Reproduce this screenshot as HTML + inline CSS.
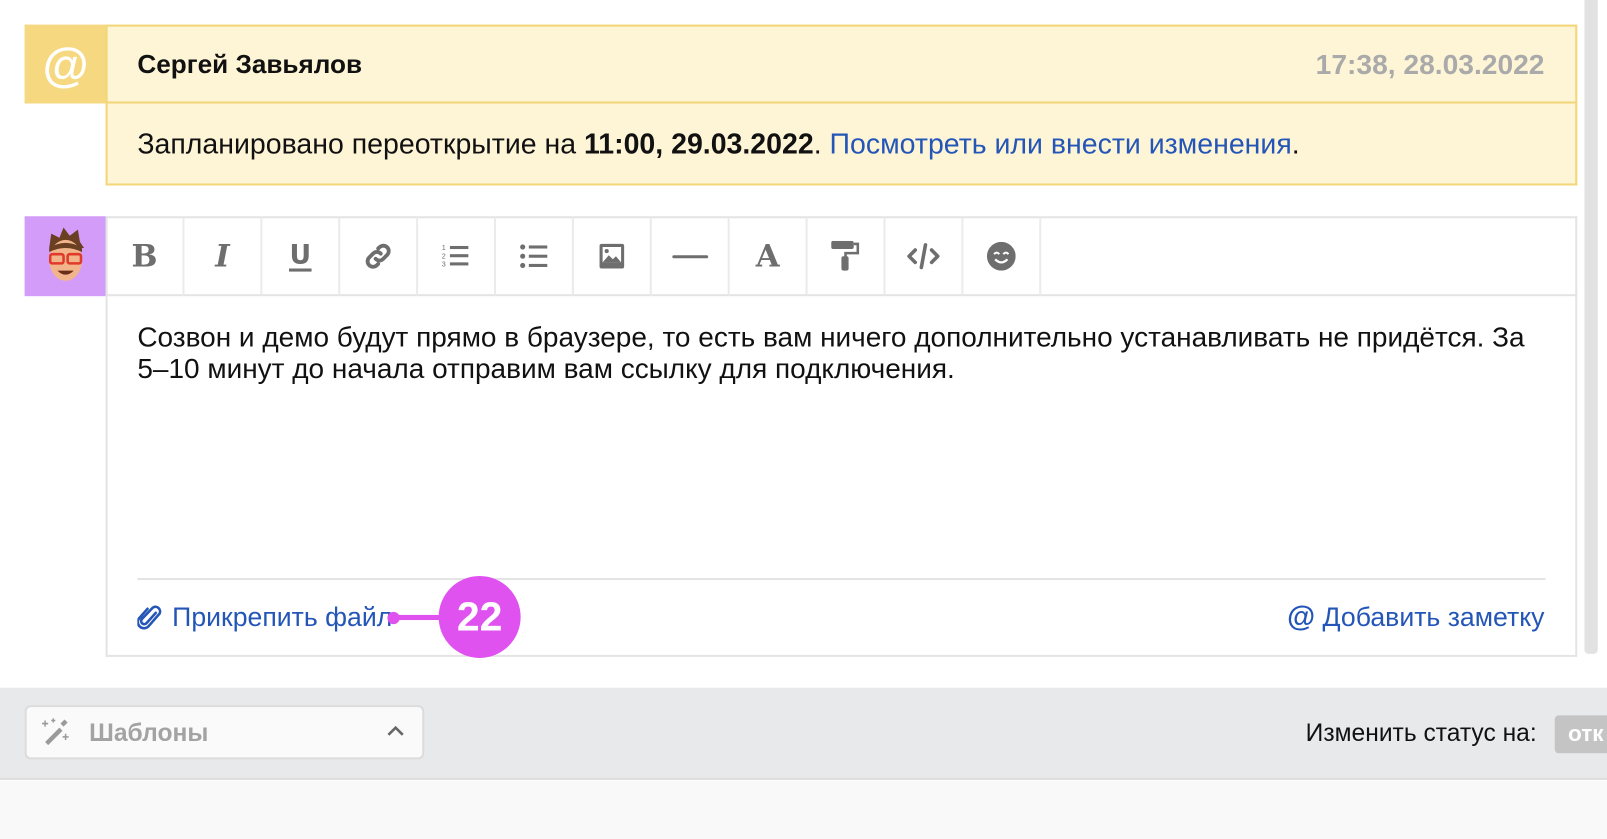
<!DOCTYPE html>
<html><head><meta charset="utf-8"><style>
*{box-sizing:border-box;margin:0;padding:0}
body{width:1607px;height:819px;background:#fff;font-family:"Liberation Sans",sans-serif;overflow:hidden;color:#1a1a1a}
#w{position:relative;width:1568px;height:800px;transform:scale(1.02487);transform-origin:0 0}
.abs{position:absolute}
.tb{position:absolute;top:212px;width:76px;height:76px;border-right:2px solid #ebebeb;display:flex;align-items:center;justify-content:center}
</style></head><body><div id="w">
<div class="abs" style="left:0;top:0;width:1568px;height:671px;background:#fff"></div>
<div class="abs" style="left:1546px;top:0;width:13px;height:638px;background:#e2e2e2;border-radius:0 0 4px 4px"></div>

<div class="abs" style="left:24px;top:24px;width:80px;height:77px;background:#f5d87f;display:flex;align-items:center;justify-content:center;color:#fff;font-size:46px;font-weight:bold">@</div>
<div class="abs" style="left:103px;top:24px;width:1436px;height:157px;background:#fef5d7;border:2px solid #f2d677"></div>
<div class="abs" style="left:103px;top:99px;width:1436px;height:2px;background:#f2d677"></div>
<div class="abs" style="left:134px;top:47px;font-size:25.5px;line-height:32px;font-weight:bold;color:#111">Сергей Завьялов</div>
<div class="abs" style="right:61px;top:46px;font-size:27.5px;line-height:34px;font-weight:bold;color:#aaa">17:38, 28.03.2022</div>
<div class="abs" style="left:134px;top:124px;font-size:27.8px;line-height:34px;color:#111;white-space:nowrap">Запланировано переоткрытие на <b>11:00, 29.03.2022</b>. <span style="color:#2456b8">Посмотреть или внести изменения</span>.</div>

<div class="abs" style="left:24px;top:211px;width:80px;height:78px;background:#d49cf9;display:flex;align-items:center;justify-content:center">
<svg width="48" height="60" viewBox="0 0 48 60"><path d="M8 22 L10 8 L18 12 L22 2 L28 10 L36 4 L38 16 L42 22 Z" fill="#6b3f22"/><ellipse cx="24" cy="34" rx="16" ry="20" fill="#f2b48a"/><path d="M8 22 Q24 12 40 22 L40 26 Q24 18 8 26Z" fill="#6b3f22"/><rect x="9" y="28" width="13" height="9" rx="2" fill="none" stroke="#e03a2a" stroke-width="2.5"/><rect x="26" y="28" width="13" height="9" rx="2" fill="none" stroke="#e03a2a" stroke-width="2.5"/><path d="M16 44 Q24 52 32 44Z" fill="#6a2d1a"/></svg></div>
<div class="abs" style="left:103px;top:211px;width:1436px;height:430px;border:2px solid #e4e4e4"></div>
<div class="abs" style="left:103px;top:287px;width:1436px;height:2px;background:#e4e4e4"></div>

<div class="tb" style="left:104px"><span style="font:bold 30px 'DejaVu Serif',serif;color:#6e6e6e">B</span></div>
<div class="tb" style="left:180px"><span style="font:italic bold 30px 'DejaVu Serif',serif;color:#6e6e6e">I</span></div>
<div class="tb" style="left:256px"><span style="font:bold 26px 'DejaVu Sans',sans-serif;color:#6e6e6e;border-bottom:3px solid #6e6e6e;line-height:26px">U</span></div>
<div class="tb" style="left:332px"><svg width="30" height="30" viewBox="0 0 24 24" fill="none" stroke="#6e6e6e" stroke-width="3" stroke-linecap="round"><path d="M10 14a4 4 0 0 0 6 0l3-3a4 4 0 0 0-6-6l-1 1"/><path d="M14 10a4 4 0 0 0-6 0l-3 3a4 4 0 0 0 6 6l1-1"/></svg></div>
<div class="tb" style="left:408px"><svg width="28" height="26" viewBox="0 0 28 26"><text x="0" y="7" font-size="7" fill="#6e6e6e" font-family="Liberation Sans">1</text><text x="0" y="15" font-size="7" fill="#6e6e6e" font-family="Liberation Sans">2</text><text x="0" y="23" font-size="7" fill="#6e6e6e" font-family="Liberation Sans">3</text><rect x="8" y="3" width="18" height="3" fill="#6e6e6e"/><rect x="8" y="11" width="18" height="3" fill="#6e6e6e"/><rect x="8" y="19" width="18" height="3" fill="#6e6e6e"/></svg></div>
<div class="tb" style="left:484px"><svg width="28" height="24" viewBox="0 0 28 24" fill="#6e6e6e"><circle cx="3" cy="3" r="2.5"/><circle cx="3" cy="12" r="2.5"/><circle cx="3" cy="21" r="2.5"/><rect x="9" y="1.5" width="18" height="3"/><rect x="9" y="10.5" width="18" height="3"/><rect x="9" y="19.5" width="18" height="3"/></svg></div>
<div class="tb" style="left:560px"><svg width="26" height="26" viewBox="0 0 26 26"><rect x="1" y="1" width="24" height="24" rx="2" fill="#6e6e6e"/><rect x="4" y="4" width="18" height="15" fill="#fff"/><circle cx="8" cy="8" r="2" fill="#6e6e6e"/><path d="M4 19 L10 12 L14 16 L17 13 L22 19Z" fill="#6e6e6e"/></svg></div>
<div class="tb" style="left:636px"><div style="width:35px;height:3px;background:#6e6e6e;border-radius:2px"></div></div>
<div class="tb" style="left:712px"><span style="font:bold 30px 'DejaVu Serif',serif;color:#6e6e6e">A</span></div>
<div class="tb" style="left:788px"><svg width="28" height="30" viewBox="0 0 28 30" fill="#6e6e6e"><rect x="0" y="0" width="22" height="8" rx="2"/><path d="M22 3 h4 v9 h-12 v4" fill="none" stroke="#6e6e6e" stroke-width="2.5"/><rect x="10" y="15" width="7" height="14" rx="2"/></svg></div>
<div class="tb" style="left:864px"><svg width="34" height="28" viewBox="0 0 34 28" fill="none" stroke="#6e6e6e" stroke-width="3.5" stroke-linecap="round" stroke-linejoin="round"><path d="M9 8 L3 14 L9 20"/><path d="M25 8 L31 14 L25 20"/><path d="M19 3 L15 25"/></svg></div>
<div class="tb" style="left:940px"><svg width="28" height="28" viewBox="0 0 28 28"><circle cx="14" cy="14" r="14" fill="#6e6e6e"/><path d="M7 12 q2.5-3 5 0 M16 12 q2.5-3 5 0" fill="none" stroke="#fff" stroke-width="2"/><path d="M8 17 q6 6 12 0" fill="none" stroke="#fff" stroke-width="2.2"/></svg></div>

<div class="abs" style="left:134px;top:313px;width:1385px;font-size:27.3px;line-height:31px;color:#111">Созвон и демо будут прямо в браузере, то есть вам ничего дополнительно устанавливать не придётся. За <span style="white-space:nowrap">5–10</span> минут до начала отправим вам ссылку для подключения.</div>

<div class="abs" style="left:134px;top:564px;width:1374px;height:2px;background:#e4e4e4"></div>
<div class="abs" style="left:134px;top:586px;font-size:26px;line-height:32px;color:#2456b8;display:flex;align-items:center;gap:10px"><svg width="24" height="26" viewBox="0 0 24 26" fill="none" stroke="#2456b8" stroke-width="2.5" stroke-linecap="round"><path d="M18 9 L9 19 a3 3 0 0 1-4.5-4 L15 4 a4.5 4.5 0 0 1 6.5 6 L11 22 a6 6 0 0 1-9-8 L10 5"/></svg>Прикрепить файл</div>
<div class="abs" style="right:61px;top:586px;font-size:26px;line-height:32px;color:#2456b8"><b style="font-size:28px">@</b> Добавить заметку</div>

<div class="abs" style="left:378px;top:597px;width:12px;height:12px;border-radius:50%;background:#e052f0"></div>
<div class="abs" style="left:384px;top:600px;width:50px;height:5px;background:#e052f0"></div>
<div class="abs" style="left:428px;top:562px;width:80px;height:80px;border-radius:50%;background:#e052f0;color:#fff;font-weight:bold;font-size:40px;display:flex;align-items:center;justify-content:center">22</div>

<div class="abs" style="left:0;top:671px;width:1568px;height:90px;background:#e8e9eb;border-bottom:2px solid #dedede"></div>
<div class="abs" style="left:0;top:762px;width:1568px;height:57px;background:#f9f9f9"></div>
<div class="abs" style="left:24px;top:688px;width:390px;height:53px;background:#fafafa;border:2px solid #dcdcdc;border-radius:6px"></div>
<svg class="abs" style="left:40px;top:700px" width="28" height="28" viewBox="0 0 28 28"><path d="M4 24 L18 10 L21 13 L7 27Z" fill="#9a9a9a"/><path d="M19 6 L23 2 L26 5 L22 9Z" fill="#9a9a9a"/><path d="M4 3 v6 M1 6 h6 M12 1 v4 M10 3 h4 M24 16 v6 M21 19 h6" stroke="#9a9a9a" stroke-width="1.5"/></svg>
<div class="abs" style="left:87px;top:701px;font-size:24px;line-height:30px;font-weight:bold;color:#a3a3a3">Шаблоны</div>
<svg class="abs" style="left:376px;top:706px" width="20" height="14" viewBox="0 0 20 14"><path d="M3 11 L10 4 L17 11" fill="none" stroke="#666" stroke-width="2.5"/></svg>
<div class="abs" style="left:1274px;top:701px;font-size:24px;line-height:30px;color:#111">Изменить статус на:</div>
<div class="abs" style="left:1517px;top:698px;width:100px;height:37px;background:#c4c4c4;border-radius:4px;color:#fff;font-weight:bold;font-size:22px;padding:5px 0 0 13px">отк</div>
</div></body></html>
